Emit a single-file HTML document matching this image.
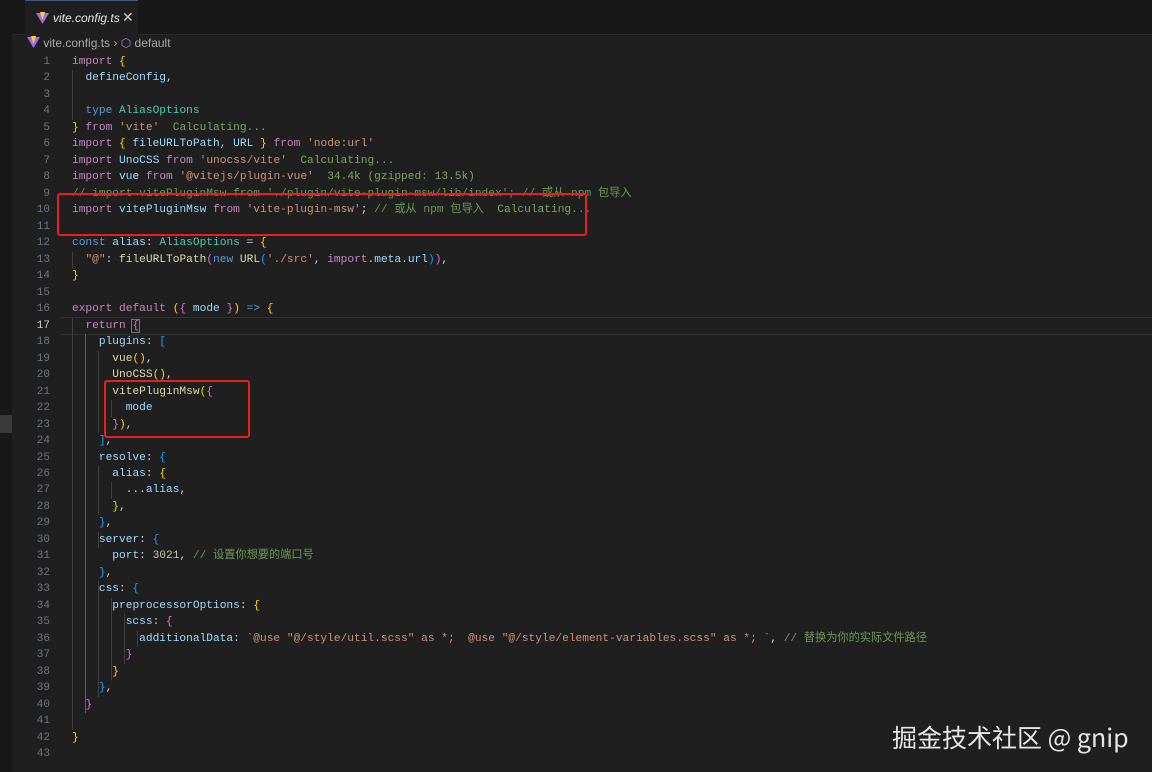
<!DOCTYPE html>
<html><head><meta charset="utf-8"><style>
html,body{margin:0;padding:0;width:1152px;height:772px;overflow:hidden;background:#1f1f1f;font-family:"Liberation Sans","Noto Sans CJK SC",sans-serif;}
.left{position:absolute;left:0;top:0;width:12px;height:772px;background:#181818;}
.tabs{position:absolute;left:12px;top:0;width:1140px;height:34px;background:#181818;border-bottom:1px solid #2b2b2b;}
.tab{position:absolute;left:13px;top:0;width:113px;height:35px;background:#1f1f1f;border-top:1px solid #3c5a80;box-sizing:border-box;}
.tab .n{position:absolute;left:28px;top:10px;font-style:italic;font-size:12px;color:#e8e8e8;}
.tab .x{position:absolute;left:97px;top:8px;font-size:14px;color:#ccc;}
.crumb{position:absolute;left:27px;top:36px;font-size:12px;color:#a9a9a9;}
.code{position:absolute;left:0;top:54px;font-family:"Liberation Mono","Noto Sans CJK SC",monospace;font-size:11.2px;}
.l{position:absolute;height:16.48px;line-height:16.48px;white-space:pre;color:#d4d4d4;}
.num{position:absolute;width:50px;text-align:right;height:16.48px;line-height:16.48px;color:#6e7681;font-family:"Liberation Mono",monospace;font-size:11px;}
.k{color:#c586c0}.b{color:#569cd6}.v{color:#9cdcfe}.f{color:#dcdcaa}.s{color:#ce9178}.c{color:#6a9955}.t{color:#4ec9b0}.y{color:#ffd700}.p{color:#da70d6}.bl{color:#179fff}.nm{color:#b5cea8}.g{color:#7aa55f}
.guide{position:absolute;width:1px;background:#404040;}
.red{position:absolute;border:2.5px solid #e8201c;border-radius:3px;box-sizing:border-box;}
.wm{position:absolute;left:892px;top:719px;font-size:25px;color:#e6e6e6;font-family:"Noto Sans CJK SC","Liberation Sans",sans-serif;}
</style></head><body>
<div class="left"></div>
<div style="position:absolute;left:0;top:415px;width:12px;height:18px;background:#3a3a3a"></div>
<div class="tabs"><div class="tab">
<svg style="position:absolute;left:11px;top:11px" width="13" height="13" viewBox="0 0 13 13"><path d="M0 1 L13 1 L6.5 12 Z" fill="#9b6cf0"/><path d="M4 0 L9 0 L6.5 8 Z" fill="#ffd028"/></svg>
<span class="n">vite.config.ts</span><span class="x">✕</span></div></div>
<div class="crumb"><svg style="vertical-align:-2px" width="13" height="13" viewBox="0 0 13 13"><path d="M0 1 L13 1 L6.5 12 Z" fill="#9b6cf0"/><path d="M4 0 L9 0 L6.5 8 Z" fill="#ffd028"/></svg> vite.config.ts › <span style="color:#b180d7">⬡</span> default</div>
<div style="position:absolute;left:60px;top:317px;width:1092px;height:16px;border-top:1px solid #303030;border-bottom:1px solid #303030"></div>
<div class="code" id="c"></div>
<div class="red" style="left:57px;top:193px;width:530px;height:43px"></div>
<div class="red" style="left:104px;top:380px;width:146px;height:58px"></div>
<div class="wm">掘金技术社区 @ gnip</div>
<script>
var L=[
'<span class="k">import</span> <span class="y">{</span>',
'  <span class="v">defineConfig</span>,',
'',
'  <span class="b">type</span> <span class="t">AliasOptions</span>',
'<span class="y">}</span> <span class="k">from</span> <span class="s">\'vite\'</span>  <span class="g">Calculating...</span>',
'<span class="k">import</span> <span class="y">{</span> <span class="v">fileURLToPath</span>, <span class="v">URL</span> <span class="y">}</span> <span class="k">from</span> <span class="s">\'node:url\'</span>',
'<span class="k">import</span> <span class="v">UnoCSS</span> <span class="k">from</span> <span class="s">\'unocss/vite\'</span>  <span class="g">Calculating...</span>',
'<span class="k">import</span> <span class="v">vue</span> <span class="k">from</span> <span class="s">\'@vitejs/plugin-vue\'</span>  <span class="g">34.4k (gzipped: 13.5k)</span>',
'<span class="c">// import vitePluginMsw from \'./plugin/vite-plugin-msw/lib/index\'; // 或从 npm 包导入</span>',
'<span class="k">import</span> <span class="v">vitePluginMsw</span> <span class="k">from</span> <span class="s">\'vite-plugin-msw\'</span>; <span class="c">// 或从 npm 包导入</span>  <span class="g">Calculating...</span>',
'',
'<span class="b">const</span> <span class="v">alias</span>: <span class="t">AliasOptions</span> = <span class="y">{</span>',
'  <span class="s">"@"</span>: <span class="f">fileURLToPath</span><span class="p">(</span><span class="b">new</span> <span class="f">URL</span><span class="bl">(</span><span class="s">\'./src\'</span>, <span class="k">import</span>.<span class="v">meta</span>.<span class="v">url</span><span class="bl">)</span><span class="p">)</span>,',
'<span class="y">}</span>',
'',
'<span class="k">export</span> <span class="k">default</span> <span class="y">(</span><span class="p">{</span> <span class="v">mode</span> <span class="p">}</span><span class="y">)</span> <span class="b">=&gt;</span> <span class="y">{</span>',
'  <span class="k">return</span> <span class="p" style="outline:1px solid #777">{</span>',
'    <span class="v">plugins</span>: <span class="bl">[</span>',
'      <span class="f">vue</span><span class="y">()</span>,',
'      <span class="f">UnoCSS</span><span class="y">()</span>,',
'      <span class="f">vitePluginMsw</span><span class="y">(</span><span class="p">{</span>',
'        <span class="v">mode</span>',
'      <span class="p">}</span><span class="y">)</span>,',
'    <span class="bl">]</span>,',
'    <span class="v">resolve</span>: <span class="bl">{</span>',
'      <span class="v">alias</span>: <span class="y">{</span>',
'        ...<span class="v">alias</span>,',
'      <span class="y">}</span>,',
'    <span class="bl">}</span>,',
'    <span class="v">server</span>: <span class="bl">{</span>',
'      <span class="v">port</span>: <span class="nm">3021</span>, <span class="c">// 设置你想要的端口号</span>',
'    <span class="bl">}</span>,',
'    <span class="v">css</span>: <span class="bl">{</span>',
'      <span class="v">preprocessorOptions</span>: <span class="y">{</span>',
'        <span class="v">scss</span>: <span class="p">{</span>',
'          <span class="v">additionalData</span>: <span class="s">`@use "@/style/util.scss" as *;  @use "@/style/element-variables.scss" as *; `</span>, <span class="c">// 替换为你的实际文件路径</span>',
'        <span class="p">}</span>',
'      <span class="y">}</span>',
'    <span class="bl">}</span>,',
'  <span class="p">}</span>',
'',
'<span class="y">}</span>',
''];
var h='',lh=16.48;
for(var i=0;i<L.length;i++){
 var yy=(i*lh).toFixed(2);
 h+='<div class="num" style="top:'+yy+'px;'+(i==16?'color:#ccc;':'')+'">'+(i+1)+'</div>';
 h+='<div class="l" style="left:72px;top:'+yy+'px">'+L[i]+'</div>';
}
var G=[[72,1,3],[72,12,12],[72,16,40],[85,17,39],[98,18,22],[111,21,21],[98,25,27],[111,26,26],[98,29,29],[98,32,38],[111,33,37],[124,34,36],[137,35,35]];
G.forEach(function(g){h+='<div class="guide" style="left:'+g[0]+'px;top:'+(g[1]*lh).toFixed(2)+'px;height:'+((g[2]-g[1]+1)*lh).toFixed(2)+'px;'+(g[0]==85&&g[1]==17?'background:#7a4b8a':'')+'"></div>';});
document.getElementById('c').innerHTML=h;
</script>
</body></html>
